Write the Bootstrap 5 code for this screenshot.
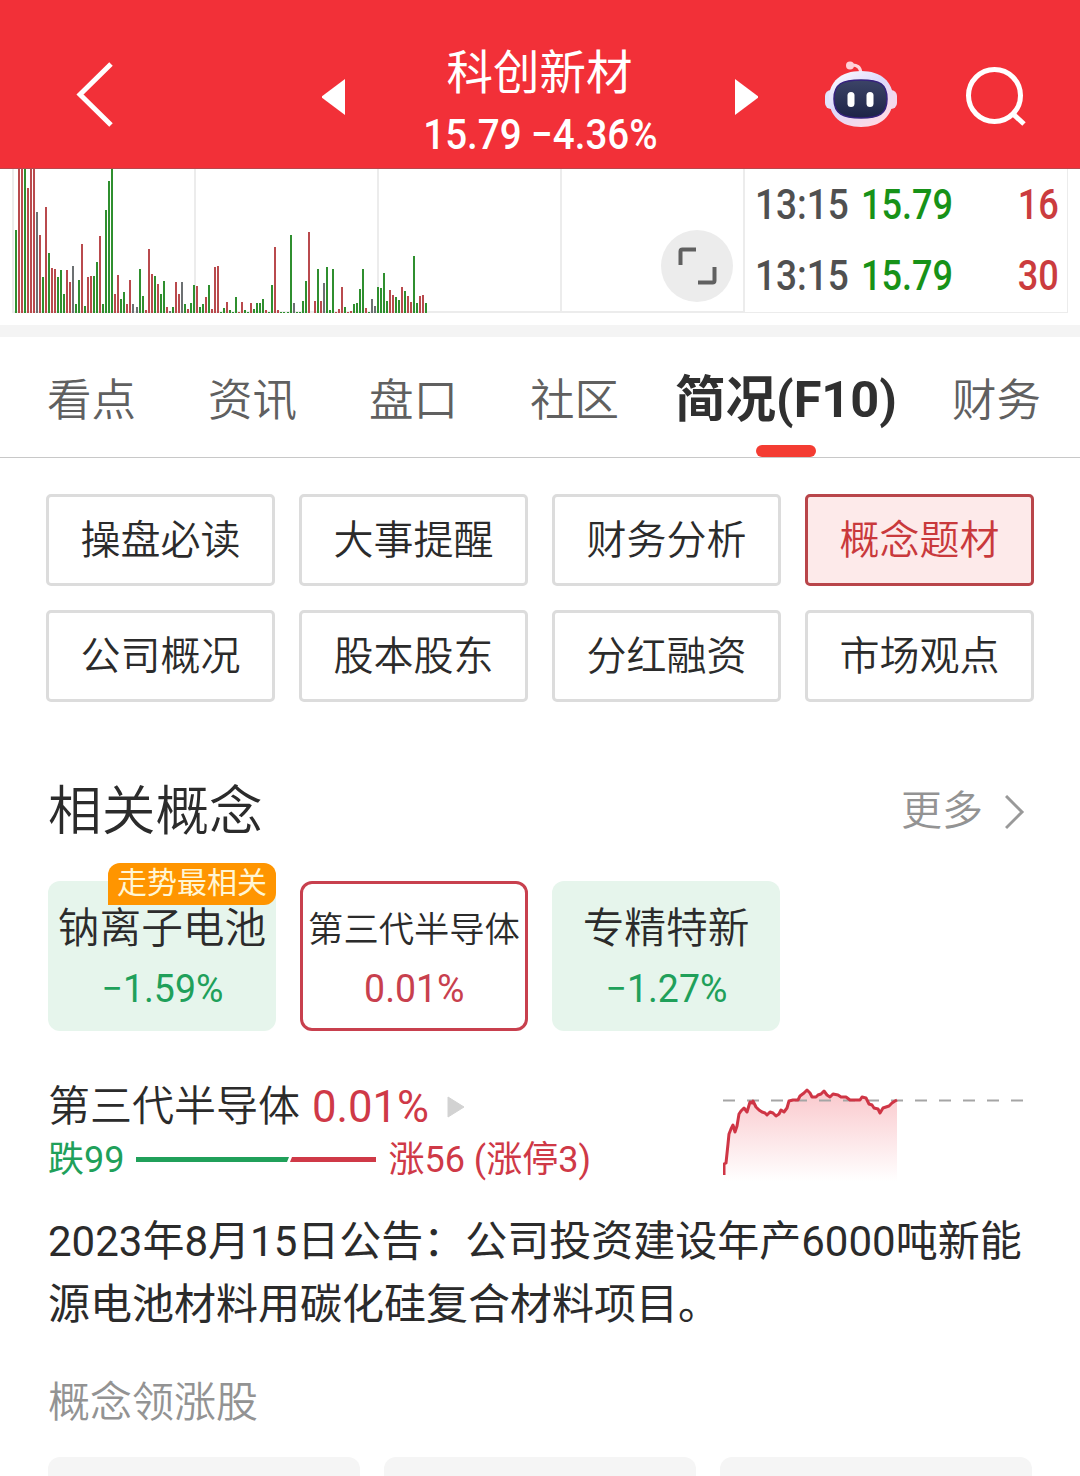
<!DOCTYPE html>
<html lang="zh-CN">
<head>
<meta charset="utf-8">
<meta name="viewport" content="width=device-width, initial-scale=1">
<title>科创新材</title>
<link rel="stylesheet" href="https://cdn.jsdelivr.net/npm/bootstrap@5.3.0/dist/css/bootstrap.min.css">
<style>
body{font-family:Roboto,"Noto Sans CJK SC",sans-serif;color:#2b2b2b;background:#fff;width:1080px;height:1476px;overflow:hidden}
svg{display:block;flex:none}
.num{display:inline-block;white-space:nowrap;transform-origin:0 50%}
.top-bar{height:169px;background:#f23038;color:#fff;padding:0 54px 0 76px;border-bottom:1px solid #b9474d}
.top-back{margin-top:61px}
.top-prev{margin:79px 0 0 208px}
.top-title{width:388px;padding-top:39px}
.stock-name{font-size:46.5px;font-weight:400;line-height:68px;height:68px;margin-left:-1px}
.stock-quote{font-size:43px;font-weight:500;line-height:54px;transform:scaleX(.896);transform-origin:51% 50%}
.top-next{margin-top:79px}
.top-bot{margin:60px 0 0 67px}
.top-find{margin:66px 0 0 67px}
.quote-strip{height:156px}
.volume{width:743px;height:156px}
.expand-btn{left:661px;top:61px;width:72px;height:72px;background:#ececec}
.ticks{width:325px;height:144px;border:solid #ececec;border-width:0 1px 1px 2px;padding:0 8px 0 10px}
.tick{height:71px;line-height:71px;font-size:43px;font-weight:500}
.tick-time{width:106px;color:#505050}.tick-time .num{transform:scaleX(.86)}
.tick-price{color:#179218}.tick-price .num{transform:scaleX(.84)}
.tick-vol{color:#cb3c3e}.tick-vol .num{transform:scaleX(.84);transform-origin:100% 50%}
.band{height:12px;background:#f4f4f4}
.tab-bar{height:121px;border-bottom:1px solid #c8c8c8;padding-left:47px;font-size:44.5px;font-weight:350;color:#606060;overflow:hidden}
.tab-item{flex:none;width:161px;line-height:128px;white-space:nowrap}
.tab-on{width:277px;margin-left:-16px;font-size:50.5px;font-weight:700;color:#303030;position:relative;line-height:126px}
.tab-on::after{content:"";position:absolute;left:81px;top:108px;width:60px;height:12px;border-radius:6px;background:#f43c32}
.menu-grid{display:grid;grid-template-columns:repeat(4,229px);gap:24px;padding:36px 46px 0}
.menu-btn{height:92px;border:3px solid #dcdcdc;border-radius:5px;font-size:40px;font-weight:350;line-height:87px;padding:0;color:#2b2b2b;background:#fff}
.menu-btn.picked{border-color:#b9454a;background:#fdeaea;color:#c9393c}
.sec-head{height:179px;padding:77px 55px 0 48px}
.sec-title{font-size:53.7px;line-height:66px;margin:0;font-weight:350}
.sec-more{font-size:41px;font-weight:350;line-height:64px;color:#939393}
.concepts{gap:24px;padding-left:48px}
.concept{width:228px;height:150px;border-radius:12px;background:#e6f5ec;color:#20a05a;padding-top:18px}
.concept-name{font-size:41.7px;font-weight:350;line-height:60px;color:#2b2b2b;white-space:nowrap;margin:0 -5px}
.concept-pct{font-size:39px;line-height:60px;height:60px}
.concept-pct .num{transform:scaleX(.96);transform-origin:50% 50%}
.concept.picked{background:#fff;border:3px solid #c8404e;color:#c8404e;padding-top:16px}
.concept.picked .concept-name{font-size:35.3px}
.concept.picked .concept-pct{margin-top:-1px}
.flag{right:0;top:-18px;width:168px;height:42px;border-radius:12px 12px 12px 0;background:#ff9500;color:#fff6d5;font-size:30px;line-height:39px}
.detail{padding:43px 55px 0 48px;height:175px}
.detail-name{font-size:42px;font-weight:350;line-height:66px;height:66px}
.detail-pct{font-size:45px;font-weight:400;color:#cf3947;margin-left:12px}.detail-pct .num{transform:scaleX(.97)}
.ratio-row{font-size:36px;line-height:42px;color:#cf3947;margin-top:-1px}
.fall{color:#20a05a}
.notice{padding:4px 0 0 48px;font-size:42px;line-height:63px;margin:0;white-space:nowrap}
.lead-title{font-size:42px;font-weight:350;line-height:60px;color:#939393;padding:37px 0 0 48px}
.lead-cards{gap:24px;padding:24px 48px 0}
.lead-card{width:312px;height:60px;border-radius:12px 12px 0 0;background:#f5f5f5}
</style>
<script src="https://cdn.jsdelivr.net/npm/bootstrap@5.3.0/dist/js/bootstrap.bundle.min.js"></script>
</head>
<body>
<header class="top-bar d-flex align-items-start">
  <svg class="top-back" width="38" height="67" viewBox="0 0 38 67" fill="none" stroke="#fff" stroke-width="5"><path d="M35 3 4 33.5 35 64"/></svg>
  <svg class="top-prev" width="24" height="36" viewBox="0 0 24 36"><path d="M23 0V36L-1 18Z" fill="#fff"/></svg>
  <div class="top-title text-center">
    <div class="stock-name">科创新材</div>
    <div class="stock-quote">15.79 −4.36%</div>
  </div>
  <svg class="top-next" width="24" height="36" viewBox="0 0 24 36"><path d="M1 0V36L25 18Z" fill="#fff"/></svg>
  <svg class="top-bot" width="74" height="68" viewBox="0 0 74 68">
    <defs><linearGradient id="shell" x1="0" y1="0" x2=".7" y2="1"><stop offset="0" stop-color="#fff"/><stop offset=".5" stop-color="#dcd9fb"/><stop offset="1" stop-color="#ffd9e4"/></linearGradient>
    <linearGradient id="visor" x1="0" y1="0" x2="0" y2="1"><stop offset="0" stop-color="#3c4467"/><stop offset="1" stop-color="#1d2347"/></linearGradient></defs>
    <path d="M26 5Q35 4 36 13" fill="none" stroke="#ffd5dc" stroke-width="3"/><circle cx="25" cy="5.500" r="4" fill="#ffd0d8"/>
    <rect x="0" y="30" width="14" height="19" rx="6" fill="#e2e4fb"/><rect x="58" y="30" width="14" height="19" rx="6" fill="#f3d8ec"/>
    <path d="M36 11C56 11 68 22 68 38C68 56 56 67 36 67S4 56 4 38C4 22 16 11 36 11Z" fill="url(#shell)"/>
    <path d="M36 20C55 20 62 24 62 39C62 54 54 58 36 58S9 54 9 39C9 24 17 20 36 20Z" fill="url(#visor)" stroke="#36227e" stroke-width="1.5"/>
    <rect x="22.500" y="32" width="7" height="15" rx="3.5" fill="#fff"/><rect x="41.500" y="32" width="7" height="15" rx="3.5" fill="#fff"/>
  </svg>
  <svg class="top-find" width="60" height="62" viewBox="0 0 60 62" fill="none" stroke="#fff" stroke-width="5"><circle cx="28.500" cy="29.500" r="26"/><path d="M47 48 58 58"/></svg>
</header>

<section class="quote-strip d-flex">
  <div class="volume position-relative">
    <svg width="743" height="156" viewBox="0 0 743 156">
      <path d="M13 0V144M195 0V144M378 0V144M561 0V144M12 143H743" stroke="#ececec" stroke-width="2" fill="none"/>
      <g id="bars" shape-rendering="crispEdges"></g>
    </svg>
    <div class="expand-btn position-absolute rounded-circle">
      <svg width="72" height="72" viewBox="0 0 72 72" fill="none" stroke="#606060" stroke-width="4"><path d="M19.500 35V21.500Q19.500 19.500 21.500 19.500H35M53.500 37V50.500Q53.500 52.500 51.500 52.500H37"/></svg>
    </div>
  </div>
  <div class="ticks">
    <div class="tick d-flex"><div class="tick-time"><span class="num">13:15</span></div><div class="tick-price"><span class="num">15.79</span></div><div class="tick-vol ms-auto"><span class="num">16</span></div></div>
    <div class="tick d-flex"><div class="tick-time"><span class="num">13:15</span></div><div class="tick-price"><span class="num">15.79</span></div><div class="tick-vol ms-auto"><span class="num">30</span></div></div>
  </div>
</section>
<div class="band"></div>

<nav class="tab-bar d-flex">
  <div class="tab-item">看点</div><div class="tab-item">资讯</div><div class="tab-item">盘口</div><div class="tab-item">社区</div>
  <div class="tab-item tab-on">简况(F10)</div><div class="tab-item">财务</div>
</nav>

<section class="menu-grid">
  <button class="btn menu-btn">操盘必读</button><button class="btn menu-btn">大事提醒</button><button class="btn menu-btn">财务分析</button><button class="btn menu-btn picked">概念题材</button>
  <button class="btn menu-btn">公司概况</button><button class="btn menu-btn">股本股东</button><button class="btn menu-btn">分红融资</button><button class="btn menu-btn">市场观点</button>
</section>

<div class="sec-head d-flex justify-content-between">
  <h2 class="sec-title">相关概念</h2>
  <div class="sec-more d-flex">更多
    <svg width="20" height="36" viewBox="0 0 20 36" style="margin:16px 0 0 22px" fill="none" stroke="#999" stroke-width="3"><path d="M1 1 17 17 1 33"/></svg>
  </div>
</div>

<section class="concepts d-flex text-center">
  <div class="concept position-relative">
    <div class="concept-name">钠离子电池</div><div class="concept-pct"><span class="num">−1.59%</span></div>
    <span class="flag position-absolute">走势最相关</span>
  </div>
  <div class="concept picked"><div class="concept-name">第三代半导体</div><div class="concept-pct"><span class="num">0.01%</span></div></div>
  <div class="concept"><div class="concept-name">专精特新</div><div class="concept-pct"><span class="num">−1.27%</span></div></div>
</section>

<section class="detail d-flex justify-content-between">
  <div>
    <div class="detail-name d-flex align-items-center">第三代半导体<span class="detail-pct"><span class="num">0.01%</span></span>
      <svg width="18" height="22" viewBox="0 0 18 22" style="margin-left:14px"><path d="M1 1 17 11 1 21Z" fill="#d2d2d2" stroke="#d2d2d2" stroke-linejoin="round"/></svg>
    </div>
    <div class="ratio-row d-flex align-items-center"><span class="fall">跌99</span>
      <svg class="mx-2" width="248" height="6" viewBox="0 0 248 6"><path d="M4 0H157L155 5H4Z" fill="#20a05a"/><path d="M160 0H244V5H158Z" fill="#cf3947"/></svg>
      <span>涨56 (涨停3)</span></div>
  </div>
  <svg width="302" height="120" viewBox="0 0 302 120">
    <defs><linearGradient id="fade" x1="0" y1="0" x2="0" y2="1"><stop offset="0" stop-color="#fac8cc"/><stop offset="1" stop-color="#fff"/></linearGradient></defs>
    <g transform="translate(0 -2)">
      <path id="area" fill="url(#fade)"/>
      <path d="M0 28.500H302" stroke="#a5a5a5" stroke-width="2" stroke-dasharray="12 12"/>
      <path id="trend" fill="none" stroke="#cf3545" stroke-width="3" stroke-linejoin="round"/>
    </g>
  </svg>
</section>

<p class="notice">2023年8月15日公告：公司投资建设年产6000吨新能<br>源电池材料用碳化硅复合材料项目。</p>
<div class="lead-title">概念领涨股</div>
<div class="lead-cards d-flex"><div class="lead-card"></div><div class="lead-card"></div><div class="lead-card"></div></div>

<script>
// Minute volumes: height in thirds of a pixel plus direction (r up, g down, d flat)
const vol = "249g 432r 432r 432g 374r 432r 432r 302d 233r 107g 317r 180g 134r 131r 107g 128g 57g 128r 92r 142d 26g 98g 206r 20g 107r 111r 110g 153g 231r 26g 308g 396g 432g 57r 113r 42g 63g 26r 98r 26d 18d 131g 51g 8r 193r 116r 110g 88r 57g 96g 17r 6d 17g 92r 57r 92d 26g 12r 30g 83g 81r 17g 26g 48r 83g 12r 137r 140r 4g 15g 32r 8g 4g 48g 4r 32r 8g 4g 29r 12g 29g 29g 42g 9r 4g 83g 198r 9r 4g 4g 4g 234g 29d 4g 4g 35g 95g 242r 0r 35r 132g 35r 89d 137g 9g 132g 4r 12r 79r 17g 4r 5r 26g 29g 72g 132g 15r 4g 42d 21d 77g 75g 121g 37g 68r 54r 48g 40g 79r 65g 51r 32r 171g 29g 51r 55r 31g".split(" ");
const tone = {r:"#b94a4d", g:"#2f8f2f", d:"#6c7072"};
document.getElementById("bars").innerHTML = vol.map((v,k)=>{
  const h = Math.round(parseInt(v)/3);
  return `<rect x="${Math.round(14.7+3.02*k)}" y="${144-h}" width="2" height="${h}" fill="${tone[v.slice(-1)]}"/>`;
}).join("");
// Index trend of the chosen concept
const pts = "1,103 1,92 3,91 5,72 6,62 8,57 10,53 12,60 14,54 16,42 18,39 21,36 24,40 27,30 29,31 30,29 33,35 36,38 39,40 42,41 44,43 47,40 50,41 53,44 56,42 58,38 61,40 64,36 66,29 70,28 75,28 77,24 81,21 84,18 87,21 89,25 93,25 95,23 98,22 101,19 104,23 107,25 110,22 115,23 118,25 123,25 127,28 137,28 139,25 143,26 146,32 149,33 151,36 155,37 157,41 160,36 166,34 169,31 172,29 174,28";
document.getElementById("trend").setAttribute("d","M"+pts);
document.getElementById("area").setAttribute("d","M"+pts+" 174,109 1,109Z");
</script>
</body>
</html>
